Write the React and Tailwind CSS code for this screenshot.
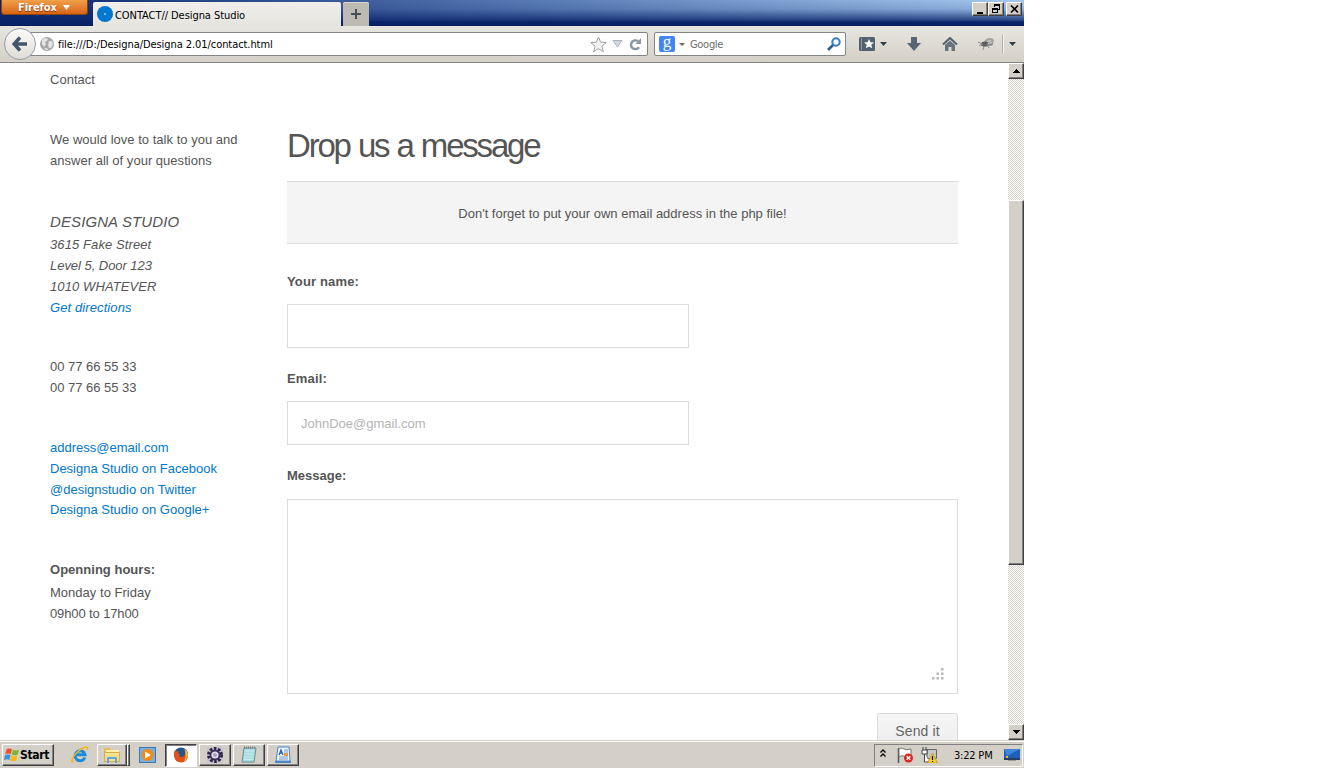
const UI = "font-['DejaVu_Sans_Condensed','DejaVu_Sans',sans-serif]";
const RAISED =
  "bg-[#d4d0c8] border border-t-white border-l-white border-r-[#404040] border-b-[#404040] shadow-[inset_-1px_-1px_0_#808080]";

function Caret({ className = "", fill = "#34404c", w = 7, h = 4 }) {
  return (
    <svg className={className} width={w} height={h} viewBox="0 0 8 4" preserveAspectRatio="none">
      <path d="M0 0h8L4 4z" fill={fill} />
    </svg>
  );
}

function WindowButton({ children, className = "" }) {
  return (
    <button className={`flex h-[14px] w-4 items-center justify-center ${RAISED} ${className}`}>{children}</button>
  );
}

function TitleBar() {
  return (
    <div className="flex h-[26px] w-full items-start bg-[linear-gradient(to_bottom,transparent_0%,rgba(10,36,106,0.15)_35%,rgba(10,36,106,0.75)_75%,#0a246a_85%,#08205f_100%),linear-gradient(to_right,#0a246a,#5577b2_50%,#a6caf0)]">
      <button
        className={`ml-px flex h-[15px] w-[87px] items-center rounded-b-[3px] border border-t-0 border-[#8a4510] bg-linear-to-b from-[#f0a04a] to-[#d9640f] pl-4 text-[11px] font-bold text-white [text-shadow:0_1px_1px_#803000] ${UI}`}
      >
        <span className="mt-[3px] tracking-[-0.05px]">Firefox</span>
        <Caret className="ml-[6px]" fill="#fff" w={7} h={5} />
      </button>
      <div className={`mt-[2px] ml-[5px] flex h-6 w-[248px] items-center rounded-t-[2px] bg-linear-to-b from-[#f0efec] to-[#e6e4df] pl-1 text-[11px] text-black ${UI}`}>
        <svg width="16" height="16" viewBox="0 0 16 16">
          <circle cx="8" cy="8" r="8" fill="#0077d0" />
          <circle cx="8" cy="8" r="1" fill="#9fd0f5" />
        </svg>
        <span className="ml-[2px] mt-[4px] tracking-[-0.06px] whitespace-nowrap">CONTACT// Designa Studio</span>
      </div>
      <div className="mt-[2px] ml-[2px] flex h-6 w-[26px] items-center justify-center rounded-t-[2px] bg-[#bdb9b3] shadow-[inset_0_1px_0_#d8d5d0]">
        <svg width="10" height="10" viewBox="0 0 10 10">
          <path d="M4 0h2v4h4v2H6v4H4V6H0V4h4z" fill="#45505a" />
        </svg>
      </div>
      <div className="mt-[2px] mr-[2px] ml-auto flex">
        <WindowButton>
          <svg width="12" height="10" viewBox="0 0 12 10"><path d="M3 8h6v2H3z" /></svg>
        </WindowButton>
        <WindowButton>
          <svg width="10" height="10" viewBox="0 0 10 10" shapeRendering="crispEdges">
            <path d="M3 0h6v6H7V5h1V2H4v1H3zM1 4h6v5H1zM2 6v2h4V6z" fillRule="evenodd" />
          </svg>
        </WindowButton>
        <WindowButton className="ml-[2px]">
          <svg width="9" height="8" viewBox="0 0 9 8"><path d="M1 .5l7 7M8 .5l-7 7" stroke="#000" strokeWidth="1.6" /></svg>
        </WindowButton>
      </div>
    </div>
  );
}

function Toolbar() {
  return (
    <div className={`flex h-[37px] w-full items-center border-b border-[#858585] bg-linear-to-b from-[#e8e6e1] to-[#d4d0c7] ${UI}`}>
      <button className="z-10 ml-[4px] flex size-8 shrink-0 items-center justify-center rounded-full border border-[#969da6] bg-linear-to-b from-[#fbfbfa] to-[#e0ddd8]">
        <svg width="16" height="16" viewBox="0 0 16 16">
          <path d="M8 1.5L2 8l6 6.500M2.500 8H15" fill="none" stroke="#46556a" strokeWidth="3.400" />
        </svg>
      </button>
      <div className="-ml-2 flex h-6 w-[620px] shrink-0 items-center rounded-[2px] border border-[#858585] bg-white pl-[11px]">
        <svg width="14" height="14" viewBox="0 0 14 14">
          <circle cx="7" cy="7" r="7" fill="#a7a7a7" />
          <path d="M2 3l3-2 3 1-1 2-2 1 1 2-2 3-2-3zM9 4l3 0 1 3-2 4-2 0-1-3zM4 11l3 0 1 2-2 0z" fill="#e4e4e4" />
        </svg>
        <span className="mt-[3px] ml-1 text-[11px] tracking-[-0.07px] whitespace-nowrap text-black">file:///D:/Designa/Designa 2.01/contact.html</span>
        <svg className="ml-auto" width="17" height="17" viewBox="0 0 17 17">
          <path d="M8.500 1l2.100 5.200 5.600.4-4.300 3.600 1.400 5.500-4.800-3-4.800 3 1.400-5.500L.8 6.600l5.600-.4z" fill="#f4f4f4" stroke="#a0a0a0" />
        </svg>
        <svg className="ml-[5px]" width="11" height="8" viewBox="0 0 11 8">
          <path d="M1 .5h9L5.500 7z" fill="#d5dae2" stroke="#a9b1bb" />
        </svg>
        <svg className="ml-[6px] mr-[5px]" width="13" height="13" viewBox="0 0 13 13">
          <path d="M10 9.300A4.400 4.400 0 1 1 9 3.200" fill="none" stroke="#8996a3" strokeWidth="2.400" />
          <path d="M12 0v6H6.500z" fill="#8996a3" />
        </svg>
      </div>
      <div className="ml-[6px] flex h-6 w-[192px] shrink-0 items-center rounded-[2px] border border-[#858585] bg-white pl-1">
        <span className="flex size-4 items-center justify-center rounded-[2px] bg-[#4285f4] font-['Liberation_Serif',serif] text-[17px] leading-none text-white">
          <span className="-mt-[5px]">g</span>
        </span>
        <Caret className="ml-1" fill="#666" w={6} h={3} />
        <span className="ml-[5px] mt-[3px] text-[11px] tracking-[-0.3px] text-[#6b6b6b]">Google</span>
        <svg className="ml-auto mr-[4px]" width="14" height="14" viewBox="0 0 14 14">
          <circle cx="9" cy="5" r="3.700" fill="#f2f8fd" stroke="#3a7cb8" strokeWidth="2" />
          <path d="M6 8l-5 5" stroke="#2b5d98" strokeWidth="2.600" />
        </svg>
      </div>
      <svg className="ml-[13px]" width="16" height="14" viewBox="0 0 16 14">
        <rect width="16" height="14" rx="1.500" fill="#53606d" />
        <path d="M2.500 1v12" stroke="#8f9aa5" />
        <path d="M10 2l1.500 3.200 3.500.3-2.700 2.200.9 3.500L10 9.400l-3.200 1.800.9-3.500L5 5.500l3.500-.3z" fill="#fff" />
      </svg>
      <Caret className="ml-[5px]" w={7} />
      <svg className="ml-[20px]" width="14" height="14" viewBox="0 0 14 14">
        <path d="M4 0h6v6h4l-7 8-7-8h4z" fill="#566573" />
      </svg>
      <svg className="ml-[21px]" width="16" height="14" viewBox="0 0 16 14">
        <path d="M1 7.500L8 1l7 6.500" fill="none" stroke="#52606d" strokeWidth="2" />
        <path d="M3 8l5-4.500L13 8v6H9.500v-4h-3v4H3z" fill="#667480" />
      </svg>
      <svg className="ml-[20px]" width="17" height="14" viewBox="0 0 17 14">
        <ellipse cx="11" cy="4.500" rx="5" ry="3.300" fill="#a3a3a0" transform="rotate(-15 11 4.500)" />
        <ellipse cx="7" cy="7" rx="4" ry="2.600" fill="#5c5c5c" />
        <ellipse cx="12" cy="7" rx="3" ry="1.800" fill="#8a8a88" />
        <path d="M0 5l4 2M1 8.500l4-1M6 9l-1 4M9 8l2 3" stroke="#8a8a8a" fill="none" />
        <path d="M9 4.500l4-1M10 6.500l4-1" stroke="#d8d8d6" />
      </svg>
      <div className="ml-[7px] h-[18px] w-px bg-[#b2b0ac] shadow-[1px_0_0_#f3f2ef]" />
      <Caret className="ml-[6px]" w={7} />
    </div>
  );
}

function Sidebar() {
  return (
    <aside className="w-[237px] shrink-0 pt-[6px] text-[13px] leading-[21px] tracking-[0.02px]">
      <p>Contact</p>
      <p className="mt-[39px]">We would love to talk to you and<br />answer all of your questions</p>
      <address className="mt-[39px] italic tracking-[0.1px]">
        <p className="mb-px text-[15px] leading-[23px] tracking-[0.1px]">DESIGNA STUDIO</p>
        <p>3615 Fake Street</p>
        <p className="tracking-[-0.04px]">Level 5, Door 123</p>
        <p>1010 WHATEVER</p>
        <a className="block text-[#0077cc]">Get directions</a>
      </address>
      <p className="mt-[38px] tracking-[-0.03px]">00 77 66 55 33<br />00 77 66 55 33</p>
      <div className="mt-10 flex flex-col leading-[20.8px] tracking-[0px] text-[#0077cc]">
        <a>address@email.com</a>
        <a>Designa Studio on Facebook</a>
        <a>@designstudio on Twitter</a>
        <a>Designa Studio on Google+</a>
      </div>
      <p className="mt-[38px] font-bold">Openning hours:</p>
      <p className="mt-[2px]">Monday to Friday<br /><span className="tracking-[-0.12px]">09h00 to 17h00</span></p>
    </aside>
  );
}

function ContactForm() {
  return (
    <main className="w-[671px] shrink-0 text-[13px] leading-[21px] tracking-[0px]">
      <h1 className="mt-[62px] h-[42px] text-[33px] leading-[42px] tracking-[-2.2px] whitespace-nowrap [word-spacing:1.2px]">Drop us a message</h1>
      <div className="mt-[14px] flex h-[63px] items-center justify-center border-y border-[#dcdcdc] bg-[#f4f4f4] pt-px">
        Don't forget to put your own email address in the php file!
      </div>
      <p className="mt-[27px] font-bold tracking-[0.15px]">Your name:</p>
      <div className="mt-[12px] h-[44px] w-[402px] border border-[#dcdcdc]" />
      <p className="mt-[20px] font-bold tracking-[0.15px]">Email:</p>
      <div className="mt-[12px] flex h-[44px] w-[402px] items-center border border-[#dcdcdc] px-[13px] text-[#b4b4b4]">JohnDoe@gmail.com</div>
      <p className="mt-[20px] font-bold">Message:</p>
      <div className="mt-[13px] flex h-[195px] items-end justify-end border border-[#dcdcdc] p-[13px]">
        <svg width="12" height="12" viewBox="0 0 12 12" fill="#b9b9b9">
          <path d="M9 0h2.500v2.500H9zM4.500 4.500H7V7H4.500zM9 4.500h2.500V7H9zM0 9h2.500v2.500H0zM4.500 9H7v2.500H4.500zM9 9h2.500v2.500H9z" />
        </svg>
      </div>
      <button className="mt-[19px] ml-auto flex h-[36px] w-[81px] items-center justify-center rounded-t-[2px] border border-[#dcdcdc] bg-linear-to-b from-[#f5f5f5] to-[#eeeeee] text-[14px] tracking-[0.1px] text-[#666]">Send it</button>
    </main>
  );
}

const CHECK = "bg-[repeating-conic-gradient(#d4d0c8_0%_25%,#ffffff_0%_50%)] bg-[length:2px_2px]";

function ScrollButton({ up }) {
  return (
    <div className={`flex h-4 items-center justify-center ${RAISED}`}>
      <svg width="7" height="4" viewBox="0 0 7 4" shapeRendering="crispEdges">
        <path d={up ? "M3 0h1v1h1v1h1v1h1v1H0V3h1V2h1V1h1z" : "M0 0h7v1H6v1H5v1H4v1H3V3H2V2H1V1H0z"} />
      </svg>
    </div>
  );
}

function Scrollbar() {
  return (
    <div className={`ml-auto flex h-full w-4 flex-col ${CHECK}`}>
      <ScrollButton up />
      <div className={`mt-[121px] h-[365px] ${RAISED}`} />
      <div className="mt-auto"><ScrollButton /></div>
    </div>
  );
}

function TaskButton({ children, className = "" }) {
  return <div className={`flex h-[22px] w-8 items-center justify-center ${RAISED} ${className}`}>{children}</div>;
}

function Taskbar() {
  return (
    <div className={`flex h-7 w-full items-center border-t border-[#d4d0c8] bg-[#d4d0c8] pt-px text-[11px] text-black shadow-[inset_0_1px_0_#fff] ${UI}`}>
      <button className={`ml-[2px] flex h-[22px] w-[52px] items-center pl-px ${RAISED}`}>
        <svg width="16" height="16" viewBox="0 0 16 16">
          <path d="M2.500 2.500Q5 .8 8 2.300L6.800 7Q4 5.800 1.200 7.200z" fill="#e8542a" />
          <path d="M9 2.800q3 1.500 6 0L13.800 7.500q-3 1.500-6 0z" fill="#7db72f" />
          <path d="M1 8.200q3-1.500 5.600-.2L5.300 13Q3 11.500 0 13z" fill="#3e8ede" />
          <path d="M7.500 8.500q3 1.500 6 0L12.200 13.500q-3 1.500-6 0z" fill="#f9b916" />
        </svg>
        <span className="text-[12px] font-bold tracking-[-0.3px]">Start</span>
      </button>
      <svg className="ml-[17px]" width="18" height="18" viewBox="0 0 18 18">
        <path d="M13.800 11.500A5 5 0 1 1 14 8.800H5.500" fill="none" stroke="#1c8bdc" strokeWidth="3" />
        <path d="M3 14.500C-1 18 .5 12 6 6.500S18-1 16.500 4" fill="none" stroke="#f2b61d" strokeWidth="1.500" />
      </svg>
      <div className="ml-[8px] flex">
        <TaskButton className="w-[30px]">
          <svg width="18" height="16" viewBox="0 0 18 16">
            <path d="M1 1h6l1 2h8v12H1z" fill="#e4bd55" />
            <path d="M3 3h13v8H3z" fill="#fff2ae" />
            <path d="M1.500 5.500h15v9h-15z" fill="#f7e08e" stroke="#d0ae50" />
            <path d="M5 16v-5h8v5" fill="none" stroke="#62a7d5" strokeWidth="2" />
          </svg>
        </TaskButton>
        <div className={`h-[22px] w-[3px] ${RAISED}`} />
      </div>
      <svg className="ml-[9px]" width="17" height="16" viewBox="0 0 17 16">
        <rect x=".5" y=".5" width="16" height="15" fill="#79afdf" stroke="#3c78b4" />
        <circle cx="8.500" cy="8" r="6" fill="#f28a13" />
        <path d="M6 4.500L12 8l-6 3.500z" fill="#fff" />
      </svg>
      <div className="ml-[9px] flex h-[23px] w-8 items-center justify-center border border-t-[#404040] border-l-[#404040] border-r-white border-b-white bg-white shadow-[inset_1px_1px_0_#808080]">
        <svg width="16" height="16" viewBox="0 0 16 16">
          <circle cx="8" cy="7.500" r="7" fill="#29558f" />
          <path d="M2 3l1 1.500L5.500 4 5 6l2 1.500L6 9q2 2 5 0 2-2 .5-6Q15 5 15 9q-1 6.500-7 6.500T1 9q-.5-3 1-6z" fill="#e0521a" />
          <path d="M11.500 2q4.500 3 3 8-1 3-3.500 4.300Q14 9 11.500 2z" fill="#ffb92d" />
        </svg>
      </div>
      <TaskButton className="ml-[2px]">
        <svg width="18" height="18" viewBox="0 0 18 18">
          <path d="M1 1h16v16H1z" fill="#c9c5cf" />
          <circle cx="9" cy="9" r="6.500" fill="none" stroke="#2d2445" strokeWidth="3" strokeDasharray="2.600 1.500" />
          <circle cx="9" cy="9" r="5.500" fill="#3b2c5d" />
          <circle cx="9" cy="9" r="3.600" fill="#e2deec" />
          <circle cx="9" cy="9" r="2" fill="#a59dbb" />
        </svg>
      </TaskButton>
      <TaskButton className="ml-[2px]">
        <svg width="16" height="18" viewBox="0 0 16 18">
          <path d="M3 2h12l-2 14H1z" fill="#a9dcdf" stroke="#619296" />
          <path d="M4 5h9M4 8h8M3 11h9M3 13.500h9" stroke="#c9eef0" />
          <path d="M3 1.500h12" stroke="#777" strokeDasharray="1 1" strokeWidth="2" />
        </svg>
      </TaskButton>
      <TaskButton className="ml-[2px]">
        <svg width="16" height="18" viewBox="0 0 16 18">
          <path d="M3 1h11l1 14H1z" fill="#eef6ff" stroke="#4f86c0" />
          <path d="M4 9l2-5 2 5M5 7h2" fill="none" stroke="#2765b8" strokeWidth="1.300" />
          <path d="M9 4h4M9 6h4M4 11h9M4 13h9" stroke="#759ec9" />
          <path d="M9 7h4v3H9z" fill="#e99b3e" />
          <path d="M0 15h16v2H0z" fill="#4f86c0" />
        </svg>
      </TaskButton>
      <div className="ml-auto flex h-[23px] w-[149px] items-center border border-t-[#808080] border-l-[#808080] border-r-white border-b-white pl-[5px]">
        <svg className="-mt-[3px]" width="6" height="9" viewBox="0 0 6 9">
          <path d="M.5 3.500L3 1l2.500 2.500M.5 7.500L3 5l2.500 2.500" fill="none" stroke="#000" strokeWidth="1.300" />
        </svg>
        <svg className="ml-[11px]" width="17" height="16" viewBox="0 0 17 16">
          <path d="M1.500 1v15" stroke="#555" strokeWidth="1.500" />
          <path d="M2 1.500q3-1 5 .5t7 0v8q-4 1-6-.5t-6 0z" fill="#fff" stroke="#777" />
          <circle cx="11.500" cy="11" r="4.500" fill="#d92a24" />
          <path d="M9.700 9.200l3.600 3.600m0-3.600l-3.600 3.600" stroke="#fff" strokeWidth="1.400" />
        </svg>
        <svg className="ml-[7px]" width="17" height="16" viewBox="0 0 17 16">
          <path d="M6 2.500h9.500v9H6z" fill="#c5c8ca" stroke="#666" />
          <path d="M1 3h5v4H1zM2 0v3m3-3v3M3.500 7v8h5" fill="#fff" stroke="#444" />
          <path d="M11.500 6l5 10h-10z" fill="#ffd21d" stroke="#a98400" strokeWidth=".6" />
          <path d="M11.500 9v4m0 1v1" stroke="#000" strokeWidth="1.200" />
        </svg>
        <span className="mt-[2px] ml-4 tracking-[-0.2px] whitespace-nowrap">3:22 PM</span>
        <svg className="mr-[2px] ml-auto" width="16" height="14" viewBox="0 0 16 14">
          <path d="M0 1h16v9H0z" fill="#1f5fb8" />
          <path d="M0 1h16L3 8z" fill="#3f87dc" />
          <path d="M0 10h16v2H0z" fill="#263e61" />
          <path d="M2 8h2v2H2z" fill="#f5b922" />
          <path d="M4 12h8v1H4z" fill="#999" />
        </svg>
      </div>
      <div className="w-px" />
    </div>
  );
}

export default function App() {
  return (
    <div className="h-[768px] w-full overflow-hidden bg-white">
      <div className="flex h-[768px] w-[1024px] flex-col">
        <TitleBar />
        <Toolbar />
        <div className="flex h-[677px] w-full overflow-hidden pl-[50px] font-['Liberation_Sans',Arial,sans-serif] text-[#555]">
          <Sidebar />
          <ContactForm />
          <Scrollbar />
        </div>
        <Taskbar />
      </div>
    </div>
  );
}
